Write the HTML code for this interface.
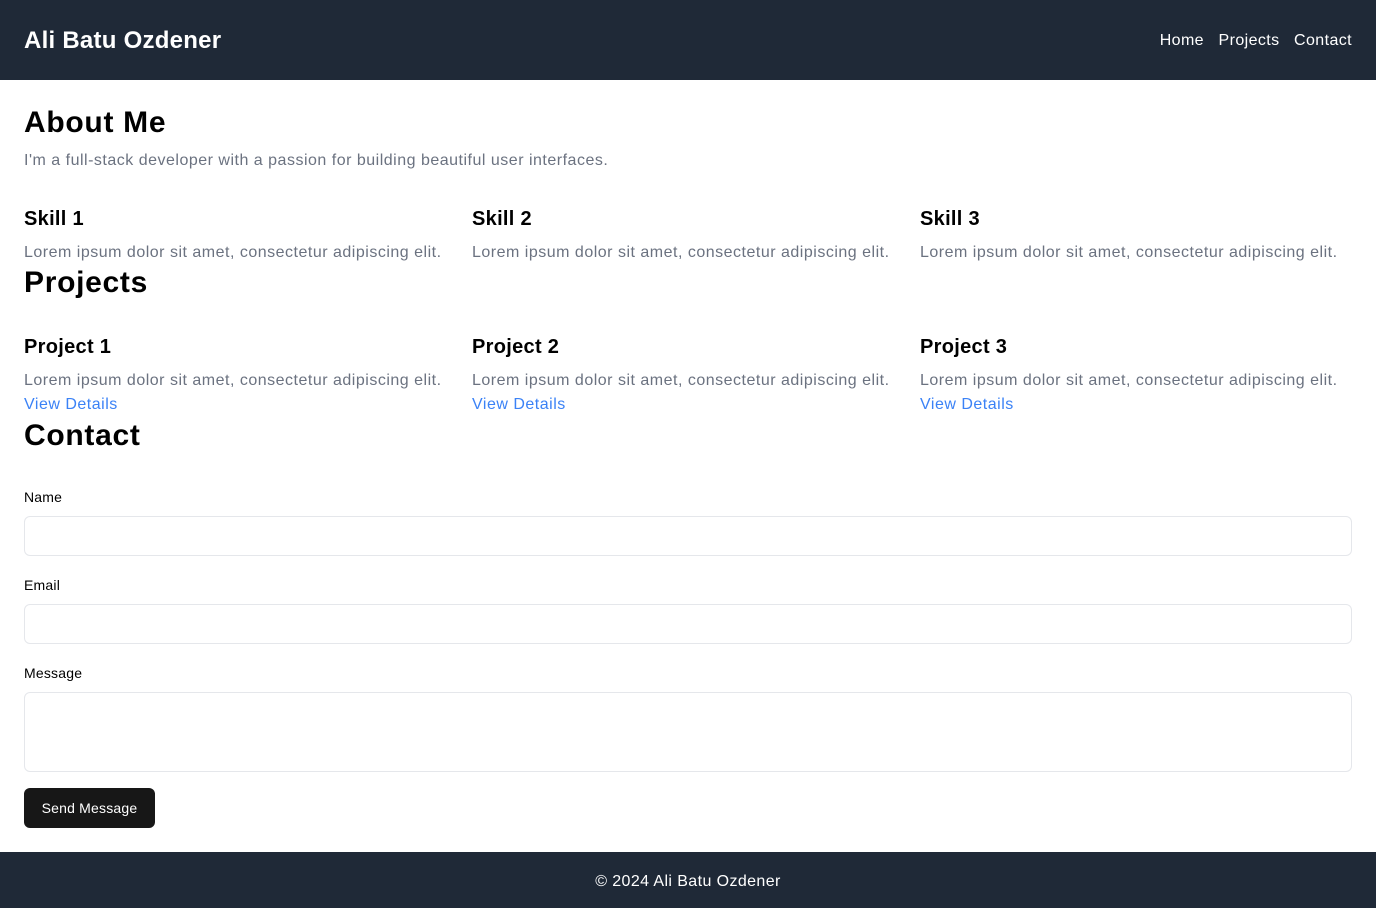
<!DOCTYPE html>
<html><head><meta charset="utf-8"><style>
*{margin:0;padding:0;box-sizing:border-box}
body{width:1376px;height:908px;position:relative;font-family:"Liberation Sans",Arial,sans-serif;background:#fff;color:#000;overflow:hidden}
.a{position:absolute;white-space:nowrap}
header{position:absolute;left:0;top:0;width:1376px;height:80px;background:#1f2937}
footer{position:absolute;left:0;top:852px;width:1376px;height:56px;background:#1f2937;color:#fff;font-size:16px;text-align:center;line-height:56px;padding-top:2px;letter-spacing:0.4px}
.h2{font-size:30px;font-weight:bold;line-height:36px;letter-spacing:0.7px}
.h3{font-size:20px;font-weight:bold;line-height:28px;letter-spacing:0.3px}
.p{font-size:16px;color:#6b7280;line-height:24px;letter-spacing:0.5px}
.lnk{font-size:16px;color:#3b82f6;line-height:24px;letter-spacing:0.5px}
.lbl{font-size:14px;line-height:20px;color:#000;letter-spacing:0.2px}
.in{position:absolute;left:24px;width:1328px;border:1px solid #e5e7eb;border-radius:6px;background:#fff}
</style></head><body>
<header>
<div class="a" style="left:24px;top:25px;font-size:24px;font-weight:bold;color:#fff;line-height:32px;letter-spacing:0.25px">Ali Batu Ozdener</div>
<div class="a" style="right:24px;top:29px;font-size:16px;color:#fff;line-height:24px;letter-spacing:0.4px">Home&nbsp;&nbsp;&nbsp;Projects&nbsp;&nbsp;&nbsp;Contact</div>
</header>
<div class="a h2" style="left:24px;top:105px">About Me</div>
<div class="a p" style="left:24px;top:149px">I'm a full-stack developer with a passion for building beautiful user interfaces.</div>
<div class="a h3" style="left:24px;top:205px">Skill 1</div>
<div class="a h3" style="left:472px;top:205px">Skill 2</div>
<div class="a h3" style="left:920px;top:205px">Skill 3</div>
<div class="a p" style="left:24px;top:241px">Lorem ipsum dolor sit amet, consectetur adipiscing elit.</div>
<div class="a p" style="left:472px;top:241px">Lorem ipsum dolor sit amet, consectetur adipiscing elit.</div>
<div class="a p" style="left:920px;top:241px">Lorem ipsum dolor sit amet, consectetur adipiscing elit.</div>
<div class="a h2" style="left:24px;top:265px">Projects</div>
<div class="a h3" style="left:24px;top:333px">Project 1</div>
<div class="a h3" style="left:472px;top:333px">Project 2</div>
<div class="a h3" style="left:920px;top:333px">Project 3</div>
<div class="a p" style="left:24px;top:369px">Lorem ipsum dolor sit amet, consectetur adipiscing elit.</div>
<div class="a p" style="left:472px;top:369px">Lorem ipsum dolor sit amet, consectetur adipiscing elit.</div>
<div class="a p" style="left:920px;top:369px">Lorem ipsum dolor sit amet, consectetur adipiscing elit.</div>
<div class="a lnk" style="left:24px;top:393px">View Details</div>
<div class="a lnk" style="left:472px;top:393px">View Details</div>
<div class="a lnk" style="left:920px;top:393px">View Details</div>
<div class="a h2" style="left:24px;top:418px">Contact</div>
<div class="a lbl" style="left:24px;top:487px">Name</div>
<div class="in" style="top:516px;height:40px"></div>
<div class="a lbl" style="left:24px;top:575px">Email</div>
<div class="in" style="top:604px;height:40px"></div>
<div class="a lbl" style="left:24px;top:663px">Message</div>
<div class="in" style="top:692px;height:80px"></div>
<div class="a" style="left:24px;top:788px;width:131px;height:40px;background:#171717;border-radius:6px;color:#fff;font-size:14px;line-height:40px;text-align:center;letter-spacing:0.2px">Send Message</div>
<footer>© 2024 Ali Batu Ozdener</footer>
</body></html>
